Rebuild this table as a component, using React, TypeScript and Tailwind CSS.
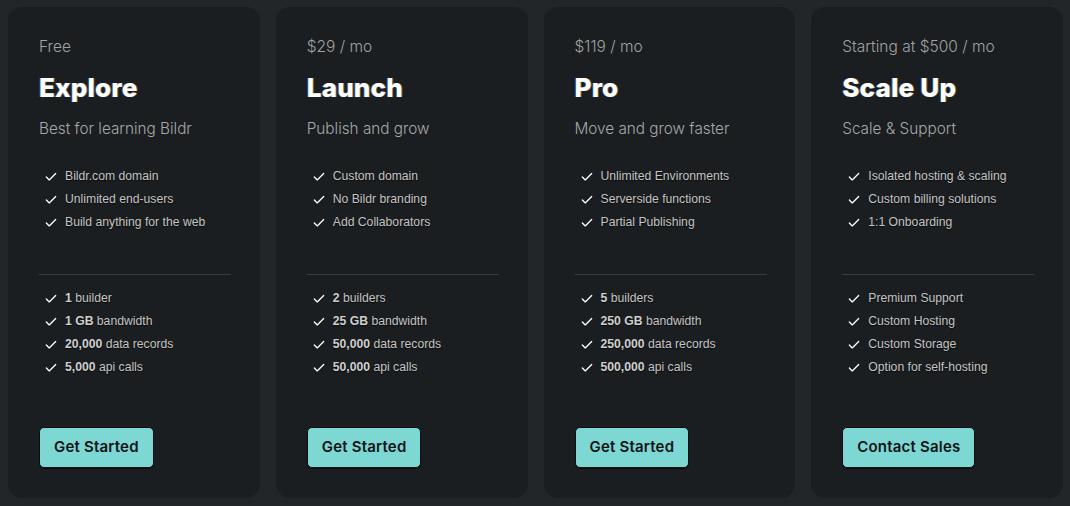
import { Check } from "lucide-react";

type Plan = {
  price: string;
  name: string;
  tagline: string;
  features: string[];
  limits: { bold?: string; text: string }[];
  cta: string;
};

const plans: Plan[] = [
  {
    price: "Free",
    name: "Explore",
    tagline: "Best for learning Bildr",
    features: ["Bildr.com domain", "Unlimited end-users", "Build anything for the web"],
    limits: [
      { bold: "1", text: "builder" },
      { bold: "1 GB", text: "bandwidth" },
      { bold: "20,000", text: "data records" },
      { bold: "5,000", text: "api calls" },
    ],
    cta: "Get Started",
  },
  {
    price: "$29 / mo",
    name: "Launch",
    tagline: "Publish and grow",
    features: ["Custom domain", "No Bildr branding", "Add Collaborators"],
    limits: [
      { bold: "2", text: "builders" },
      { bold: "25 GB", text: "bandwidth" },
      { bold: "50,000", text: "data records" },
      { bold: "50,000", text: "api calls" },
    ],
    cta: "Get Started",
  },
  {
    price: "$119 / mo",
    name: "Pro",
    tagline: "Move and grow faster",
    features: ["Unlimited Environments", "Serverside functions", "Partial Publishing"],
    limits: [
      { bold: "5", text: "builders" },
      { bold: "250 GB", text: "bandwidth" },
      { bold: "250,000", text: "data records" },
      { bold: "500,000", text: "api calls" },
    ],
    cta: "Get Started",
  },
  {
    price: "Starting at $500 / mo",
    name: "Scale Up",
    tagline: "Scale & Support",
    features: ["Isolated hosting & scaling", "Custom billing solutions", "1:1 Onboarding"],
    limits: [
      { text: "Premium Support" },
      { text: "Custom Hosting" },
      { text: "Custom Storage" },
      { text: "Option for self-hosting" },
    ],
    cta: "Contact Sales",
  },
];

function Item({ children }: { children: React.ReactNode }) {
  return (
    <li className="flex items-center h-[23px] pl-[5px]">
      <Check className="w-[14px] h-[14px] text-white shrink-0" strokeWidth={2.25} />
      <span className="ml-[7px] text-[12.2px] text-[#c4c4c4] [text-shadow:0_1px_1px_rgba(0,0,0,0.7)]">
        {children}
      </span>
    </li>
  );
}

function PlanCard({ plan }: { plan: Plan }) {
  return (
    <div className="flex-[1_1_0%] min-w-0 h-[491px] rounded-[14px] bg-[#1b1e20] pt-[30px] pl-[31px] pr-[29px] flex flex-col">
      <p className="text-[15.5px] leading-[20px] text-[#a0a2a3] font-['Inter',sans-serif] font-light">
        {plan.price}
      </p>
      <h2 className="mt-[15px] text-[26px] leading-[32px] font-extrabold text-white font-['Inter',sans-serif] tracking-[0.2px] [text-shadow:1px_0_0_rgba(255,220,120,0.35),-1px_0_0_rgba(90,160,255,0.35)]">
        {plan.name}
      </h2>
      <p className="mt-[13px] text-[15.3px] leading-[24px] text-[#a6a8a9] font-['Inter',sans-serif] font-light">
        {plan.tagline}
      </p>
      <ul className="mt-[24px]">
        {plan.features.map((f) => (
          <Item key={f}>{f}</Item>
        ))}
      </ul>
      <div className="mt-[40px] h-px w-[192px] bg-[#3a3d3f]" />
      <ul className="mt-[12px]">
        {plan.limits.map((l) => (
          <Item key={l.text + (l.bold ?? "")}>
            {l.bold && <b className="font-bold text-[#cfcfcf]">{l.bold} </b>}
            {l.text}
          </Item>
        ))}
      </ul>
      <div className="mt-[48px]">
        <button className="h-[41px] px-[14px] rounded-[5px] bg-[#7dd8d4] border border-[#0b0f10] shadow-[0_1px_0_#0b0f10] text-[15px] font-semibold text-[#101416] font-['Inter',sans-serif] tracking-[0.2px]">
          {plan.cta}
        </button>
      </div>
    </div>
  );
}

export default function App() {
  return (
    <div className="w-[1070px] h-[506px] bg-[#232628] flex gap-4 pl-2 pr-[7px] pt-[7px] font-['Liberation_Sans',Arial,sans-serif]">
      {plans.map((p) => (
        <PlanCard key={p.name} plan={p} />
      ))}
    </div>
  );
}
